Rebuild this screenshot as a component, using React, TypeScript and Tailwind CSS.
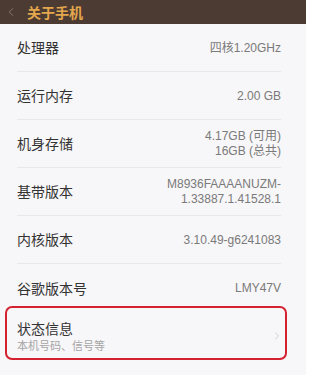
import { ChevronLeft, ChevronRight } from 'lucide-react';

const rows: { label: string; value: string[] }[] = [
  { label: '处理器', value: ['四核1.20GHz'] },
  { label: '运行内存', value: ['2.00 GB'] },
  { label: '机身存储', value: ['4.17GB (可用)', '16GB (总共)'] },
  { label: '基带版本', value: ['M8936FAAAANUZM-', '1.33887.1.41528.1'] },
  { label: '内核版本', value: ['3.10.49-g6241083'] },
];

const valueFont = { fontFamily: '"Liberation Sans", "Noto Sans CJK SC", sans-serif' };

export default function App() {
  return (
    <div
      className="w-[306px] h-[375px] overflow-hidden bg-[#f7f6f8]"
      style={{ fontFamily: '"Noto Sans CJK SC", "Liberation Sans", sans-serif' }}
    >
      {/* title bar */}
      <div className="h-[24px] bg-[#4b3b33] flex items-center">
        <ChevronLeft className="w-[14px] h-[14px] ml-[4px] text-[#8c7b70]" strokeWidth={1.5} />
        <span className="ml-[9px] text-[14px] leading-none font-bold text-[#e5a74e]">关于手机</span>
      </div>

      <div className="px-[17px] pr-[25px]">
        {rows.map((row) => (
          <div key={row.label} className="h-[48px] flex items-center justify-between border-b border-[#e9e7ea]">
            <span className="text-[14px] text-[#333]">{row.label}</span>
            <div className="flex flex-col items-end gap-[1px] text-[12px] leading-[14px] text-[#7a7a7a]" style={valueFont}>
              {row.value.map((v) => (
                <span key={v}>{v}</span>
              ))}
            </div>
          </div>
        ))}
        <div className="h-[48px] flex items-center justify-between">
          <span className="text-[14px] text-[#333]">谷歌版本号</span>
          <span className="text-[12px] text-[#7a7a7a]" style={valueFont}>LMY47V</span>
        </div>
      </div>

      {/* status row with red annotation box */}
      <div className="relative h-[48px] px-[17px] pr-[25px] flex items-center justify-between">
        <div className="flex flex-col gap-[1px]">
          <span className="text-[14px] leading-[17px] text-[#333]">状态信息</span>
          <span className="text-[11px] leading-[14px] text-[#a5a5a5]">本机号码、信号等</span>
        </div>
        <ChevronRight className="w-[12px] h-[12px] -mr-[2px] text-[#c4c4c4]" strokeWidth={1.5} />
        <div className="absolute left-[5px] right-[19px] -top-[6px] bottom-0 border-2 border-[#d42130] rounded-[7px]" />
      </div>
    </div>
  );
}
